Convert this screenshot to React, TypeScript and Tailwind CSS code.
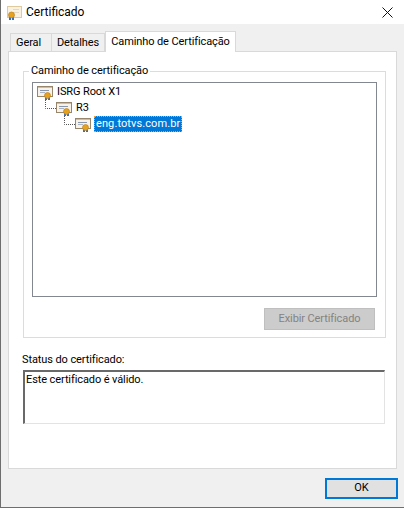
import React from "react";

// certificate glyph in the tree: seal sits bottom right of the frame
function CertIcon() {
  return (
    <svg viewBox="0 0 16 16" width="16" height="16" className="shrink-0" shapeRendering="crispEdges">
      <rect x="0.5" y="2.5" width="15" height="10" fill="#f7f3ea" stroke="#97866b" />
      <rect x="1" y="3" width="14" height="1" fill="#c9bfa9" />
      <rect x="3" y="6" width="9" height="1" fill="#8796ad" />
      <rect x="3" y="8" width="5" height="1" fill="#a9b3c2" />
      <rect x="8" y="13" width="2" height="3" fill="#2f6fd0" />
      <rect x="11" y="13" width="2" height="3" fill="#2f6fd0" />
      <circle cx="10.5" cy="11.5" r="3" fill="#e5a21f" stroke="#b9770f" strokeWidth="0.6" shapeRendering="auto" />
    </svg>
  );
}

// title bar variant, seal on the left
function TitleIcon() {
  return (
    <svg viewBox="0 0 16 16" width="16" height="16" className="shrink-0" shapeRendering="crispEdges">
      <rect x="1.5" y="2.5" width="14" height="11" fill="#f9f1e2" stroke="#e0c99a" />
      <rect x="7" y="5" width="6" height="1" fill="#e3d8c4" />
      <rect x="7" y="8" width="6" height="1" fill="#e3d8c4" />
      <rect x="3" y="13" width="2" height="3" fill="#2f6fd0" />
      <rect x="6" y="13" width="2" height="3" fill="#2f6fd0" />
      <circle cx="5.5" cy="11" r="3" fill="#e5a21f" stroke="#b9770f" strokeWidth="0.6" shapeRendering="auto" />
    </svg>
  );
}

// dotted elbow from the parent node to the child
function Elbow() {
  return (
    <svg width="11" height="16" viewBox="0 0 11 16" className="shrink-0">
      <path d="M0.5 0V8.5H11" fill="none" stroke="#555" strokeDasharray="1 1" />
    </svg>
  );
}

export default function App() {
  return (
    <div className="w-[404px] h-[508px] flex flex-col bg-[#f0f0f0] border-l border-b border-[#6e6e6e] font-['Roboto','Liberation_Sans',sans-serif] text-[11px] tracking-[-0.1px] text-black overflow-hidden">
      {/* title bar */}
      <div className="h-[24px] bg-white flex items-center shrink-0 pl-[5px] pr-[11px]">
        <TitleIcon />
        <span className="ml-[4px] flex-1 text-[12px] tracking-normal">Certificado</span>
        <svg width="11" height="11" viewBox="0 0 11 11">
          <path d="M0.5 0.5L10.5 10.5M10.5 0.5L0.5 10.5" stroke="#111" fill="none" />
        </svg>
      </div>

      {/* tabs */}
      <div className="flex items-end h-[27px] pl-[9px] shrink-0 whitespace-nowrap">
        <div className="w-[42px] h-[18px] flex items-center pl-[5px] pt-px bg-[#f0f0f0] border border-b-0 border-[#d9d9d9]">Geral</div>
        <div className="w-[53px] h-[18px] flex items-center justify-center pt-px bg-[#f0f0f0] border border-b-0 border-l-0 border-[#d9d9d9]">Detalhes</div>
        <div className="w-[131px] h-[21px] -mb-px z-10 flex items-center justify-center pt-px bg-white border border-b-0 border-[#d9d9d9]">Caminho de Certificação</div>
      </div>

      {/* tab panel */}
      <div className="w-[389px] h-[418px] ml-[7px] shrink-0 bg-white border border-[#d9d9d9] pt-[11px] pl-[14px]">
        <fieldset className="w-[363px] h-[275px] border border-[#dcdcdc] flex flex-col px-[8px] pb-[7px]">
          <legend className="-ml-[3px] px-[2px] leading-[16px]">Caminho de certificação</legend>
          <div className="mt-[3px] h-[215px] border border-[#828790] pl-[4px] pt-px flex flex-col">
            <div className="h-[16px] flex items-center">
              <CertIcon />
              <span className="ml-[4px]">ISRG Root X1</span>
            </div>
            <div className="h-[16px] flex items-center pl-[8px]">
              <Elbow />
              <CertIcon />
              <span className="ml-[4px]">R3</span>
            </div>
            <div className="h-[16px] flex items-center pl-[27px]">
              <Elbow />
              <CertIcon />
              <span className="ml-[3px] w-[88px] px-[2px] bg-[#0078d7] text-white outline-1 outline-dotted outline-[#ff9a2e] -outline-offset-1 leading-[16px] whitespace-nowrap tracking-[0.1px]">eng.totvs.com.br</span>
            </div>
          </div>
          <div className="mt-[11px] pr-[2px] flex justify-end">
            <button className="w-[111px] h-[22px] bg-[#cccccc] border border-[#bfbfbf] text-[#838383]">Exibir Certificado</button>
          </div>
        </fieldset>

        <div className="mt-[14px] -ml-px leading-[16px]">Status do certificado:</div>
        <div className="mt-[2px] w-[362px] h-[54px] bg-white border-2 border-r border-b border-t-[#696969] border-l-[#696969] border-r-[#e3e3e3] border-b-[#e3e3e3] pl-px leading-[16px]">Este certificado é válido.</div>
      </div>

      {/* footer */}
      <div className="flex justify-end pt-[9px] pr-[6px]">
        <button className="w-[73px] h-[21px] bg-[#e1e1e1] border-2 border-[#0078d7]">OK</button>
      </div>
    </div>
  );
}
